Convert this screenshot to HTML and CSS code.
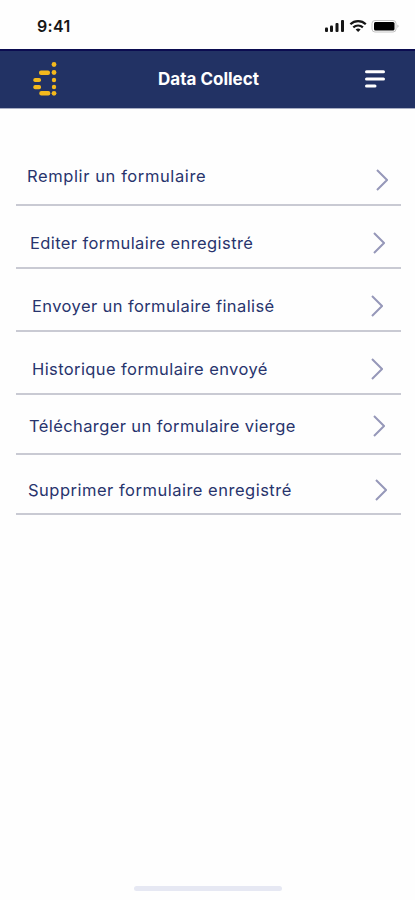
FILE: index.html
```html
<!DOCTYPE html>
<html lang="fr">
<head>
    <meta charset="UTF-8">
    <meta name="viewport" content="width=device-width, initial-scale=1.0">
    <title>Data Collect</title>
    <link rel="stylesheet" href="styles.css">
</head>
<body>
    <div class="status">
        <span class="time">9:41</span>
        <svg class="status-icons" width="76" height="16" viewBox="0 0 76 16">
            <g fill="#161616">
                <rect x="1" y="9.5" width="3" height="4.5" rx="1"/>
                <rect x="6" y="7.5" width="3" height="6.5" rx="1"/>
                <rect x="11.5" y="5" width="3" height="9" rx="1"/>
                <rect x="17" y="2" width="3" height="12" rx="1"/>
            </g>
            <g fill="none" stroke="#161616" stroke-width="2.2">
                <path d="M26.4 6.2a11 11 0 0 1 15.4 0"/>
                <path d="M29.3 9.4a7 7 0 0 1 9.6 0"/>
            </g>
            <path d="M31.6 11.4a4 4 0 0 1 5 0L34.1 14z" fill="#161616"/>
            <rect x="48" y="2.5" width="24" height="11.5" rx="3" fill="#fff" stroke="#c4c4c4"/>
            <rect x="50" y="4" width="20.5" height="8.5" rx="1.5" fill="#000"/>
            <path d="M73.5 6.5q2 1.7 0 3.5z" fill="#b0b0b0"/>
        </svg>
    </div>
    <header>
        <svg class="logo" width="26" height="36" viewBox="0 0 26 36">
            <g fill="#f4b91d">
                <circle cx="22" cy="3.5" r="2.4"/>
                <circle cx="22" cy="11.5" r="2.4"/>
                <circle cx="22" cy="19" r="2.2"/>
                <circle cx="22" cy="26" r="2.2"/>
                <circle cx="22" cy="32.3" r="2.4"/>
                <rect x="7" y="9.5" width="11" height="4.4" rx="2"/>
                <rect x="1.3" y="17" width="7.7" height="4" rx="1.8"/>
                <rect x="1.3" y="24" width="7.7" height="4.2" rx="1.8"/>
                <rect x="7.3" y="30" width="11" height="4.4" rx="2"/>
            </g>
        </svg>
        <h1>Data Collect</h1>
        <svg class="menu" width="22" height="20" viewBox="0 0 22 20">
            <path d="M2.5 2.7h17M2.5 10h17M2.5 17h8.5" stroke="#fff" stroke-width="3" stroke-linecap="round"/>
        </svg>
    </header>
    <main>
        <ul class="actions">
            <li class="fill">
                <span>Remplir un formulaire</span>
                <svg class="chevron" width="12" height="22" viewBox="0 0 12 22"><path d="M1 1l10 10L1 21"/></svg>
            </li>
            <li class="edit">
                <span>Editer formulaire enregistré</span>
                <svg class="chevron" width="12" height="22" viewBox="0 0 12 22"><path d="M1 1l10 10L1 21"/></svg>
            </li>
            <li class="send">
                <span>Envoyer un formulaire finalisé</span>
                <svg class="chevron" width="12" height="22" viewBox="0 0 12 22"><path d="M1 1l10 10L1 21"/></svg>
            </li>
            <li class="history">
                <span>Historique formulaire envoyé</span>
                <svg class="chevron" width="12" height="22" viewBox="0 0 12 22"><path d="M1 1l10 10L1 21"/></svg>
            </li>
            <li class="download">
                <span>Télécharger un formulaire vierge</span>
                <svg class="chevron" width="12" height="22" viewBox="0 0 12 22"><path d="M1 1l10 10L1 21"/></svg>
            </li>
            <li class="delete">
                <span>Supprimer formulaire enregistré</span>
                <svg class="chevron" width="12" height="22" viewBox="0 0 12 22"><path d="M1 1l10 10L1 21"/></svg>
            </li>
        </ul>
    </main>
    <footer>
        <div class="home-bar"></div>
    </footer>
</body>
</html>
```
FILE: styles.css
```css
* {
    box-sizing: border-box;
}
body {
    display: flex;
    flex-direction: column;
    height: 100vh;
    margin: 0;
    background-color: #fefefe;
    color: #28346d;
    font-family: Inter, sans-serif;
}

.status {
    display: flex;
    justify-content: space-between;
    align-items: flex-start;
    height: 49px;
    padding: 16px 15px 0 37px;
}
.time {
    color: #161616;
    font-size: 16px;
    font-weight: 600;
    line-height: 20px;
    letter-spacing: 0.3px;
}
.status-icons {
    margin-top: 2px;
}

header {
    display: flex;
    justify-content: space-between;
    align-items: center;
    height: 60px;
    padding: 0 29px 2px 32px;
    background-color: #223264;
    border-top: 2px solid #0b0c50;
    border-bottom: 1px solid #a9aec4;
}
h1 {
    margin: 0 5px 0 0;
    color: #fff;
    font-size: 17px;
    font-weight: 700;
    line-height: 24px;
}

main {
    flex: 1;
    padding: 34px 14px 0 16px;
}
.actions {
    margin: 0;
    padding: 0;
    list-style: none;
}
.actions li {
    display: flex;
    justify-content: space-between;
    align-items: flex-start;
    height: 63px;
    padding: 26px 16px 0 14px;
    border-bottom: 2px solid #c9cad3;
    font-size: 16.5px;
    line-height: 22px;
    letter-spacing: 0.4px;
    white-space: nowrap;
}
.actions .fill {
    padding-left: 11px;
    padding-right: 13px;
    letter-spacing: 0.6px;
}
.fill span {
    margin-top: -4px;
}
.actions .send, .actions .history {
    padding-left: 16px;
    padding-right: 18px;
}
.actions .download {
    height: 60px;
    padding-top: 20px;
    padding-left: 13px;
}
.actions .delete {
    height: 60px;
    padding-top: 24px;
    padding-left: 12px;
    padding-right: 14px;
    letter-spacing: 0.5px;
}
.chevron path {
    fill: none;
    stroke: #9698b9;
    stroke-width: 2;
}

footer {
    display: flex;
    justify-content: center;
    height: 14px;
}
.home-bar {
    width: 148px;
    height: 5px;
    border-radius: 3px;
    background-color: #e6e8f3;
}
```
